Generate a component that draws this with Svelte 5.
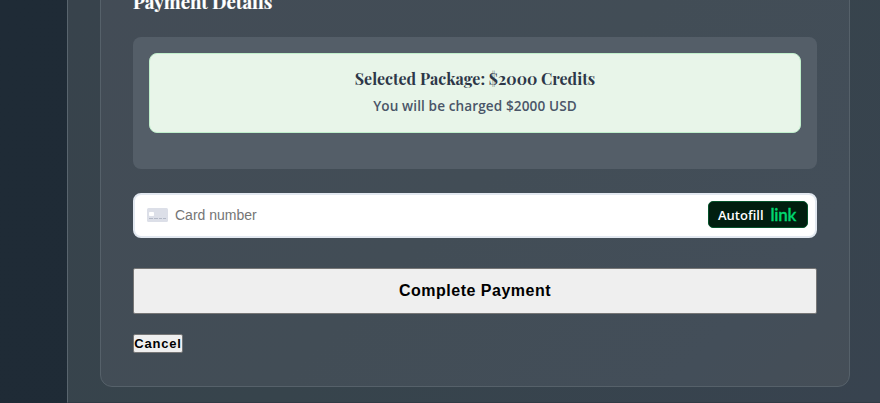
<script>
  let amount = $state(2000);
  let cardNumber = $state('');
</script>

<div class="page">
  <div class="panel">
    <section class="card">
      <h3 class="title">Payment Details</h3>

      <div class="summary">
        <div class="package">
          <h4>Selected Package: ${amount} Credits</h4>
          <p>You will be charged ${amount} USD</p>
        </div>
      </div>

      <div class="field">
        <svg class="card-icon" width="21" height="14" viewBox="0 0 21 14" aria-hidden="true">
          <rect width="21" height="14" rx="1.5" fill="#dcdfe8" />
          <rect x="2" y="4" width="5" height="4" rx="0.8" fill="#fff" />
          <path d="M2 10.5h4M7 10.5h4M12 10.5h3M16 10.5h3" stroke="#b3b9c7" stroke-width="1" />
        </svg>
        <input bind:value={cardNumber} placeholder="Card number" aria-label="Card number" />
        <button class="autofill"><span>Autofill</span><span class="link">link</span></button>
      </div>

      <button class="pay">Complete Payment</button>
      <button class="cancel">Cancel</button>
    </section>
  </div>
</div>

<style>
  .page {
    box-sizing: border-box;
    width: 880px;
    height: 403px;
    padding-left: 67px;
    overflow: hidden;
    background: linear-gradient(100deg, #1f2b36, #1e2a35);
    font-family: "Noto Sans", sans-serif;
  }
  .panel {
    box-sizing: border-box;
    height: 403px;
    padding-left: 32px;
    display: flex;
    align-items: flex-start;
    border-left: 1px solid #59656e;
    border-bottom: 1px solid #303b45;
    background: linear-gradient(135deg, #38434c 0%, #37444c 50%, #38434f 100%);
  }
  .card {
    box-sizing: border-box;
    width: 750px;
    height: 407px;
    margin-top: -20px;
    padding: 8px 32px 0;
    display: flex;
    flex-direction: column;
    align-items: flex-start;
    border: 1px solid #56616a;
    border-radius: 12px;
    background: linear-gradient(135deg, #434c56 0%, #424d56 50%, #434e59 85%, #454e57 100%);
  }
  .title {
    margin: 0 0 22px;
    height: 26px;
    font: bold 18.6px/26px "Playfair Display", "Liberation Serif", serif;
    -webkit-text-stroke: 0.2px;
    white-space: nowrap;
    color: #fff;
  }
  .summary {
    box-sizing: border-box;
    width: 684px;
    height: 132px;
    padding: 16px;
    border-radius: 8px;
    background: #545e68;
  }
  .package {
    box-sizing: border-box;
    height: 80px;
    padding-top: 14px;
    border: 1px solid #c0eecb;
    border-radius: 8px;
    background: #e8f5e9;
    text-align: center;
  }
  h4 {
    margin: 0;
    font: bold 16px/22px "Playfair Display", "Liberation Serif", serif;
    color: #2d3748;
    white-space: nowrap;
  }
  p {
    margin: 6px 0 0;
    font-family: "Open Sans", "Noto Sans", sans-serif;
    font-size: 13.6px;
    line-height: 20px;
    font-weight: 600;
    letter-spacing: 0.1px;
    color: #4a5568;
  }
  .field {
    box-sizing: border-box;
    width: 684px;
    height: 45px;
    margin-top: 24px;
    padding: 0 7px 1px 12px;
    display: flex;
    align-items: center;
    border: 2px solid #e2e8f0;
    border-radius: 8px;
    background: #fff;
  }
  .card-icon { flex: none; }
  input {
    flex: 1;
    min-width: 0;
    margin-left: 7px;
    padding: 0;
    border: 0;
    outline: 0;
    font: 14px "Liberation Sans", Arial, sans-serif;
    color: #30313d;
  }
  input::placeholder { color: #757575; opacity: 1; }
  .autofill {
    box-sizing: border-box;
    width: 100px;
    height: 27px;
    margin-bottom: 1px;
    padding: 0 11px 0 9px;
    display: flex;
    align-items: center;
    justify-content: space-between;
    border: 1px solid #04532a;
    border-radius: 5px;
    background: #011e0f;
    color: #fff;
    font: 600 13px "Open Sans", "Noto Sans", sans-serif;
  }
  .link { font: 600 17px/20px Lato, sans-serif; letter-spacing: -0.3px; color: #00d66f; -webkit-text-stroke: 0.3px; }
  .pay, .cancel {
    box-sizing: border-box;
    border: 1px solid #767676;
    background: #efefef;
    color: #000;
    font-family: "Liberation Sans", Arial, sans-serif;
    font-weight: bold;
  }
  .pay {
    width: 684px;
    height: 46px;
    margin-top: 30px;
    border-radius: 2px;
    font-size: 16px;
    letter-spacing: 0.5px;
  }
  .cancel {
    width: 50px;
    height: 19px;
    margin-top: 20px;
    padding: 0;
    border-radius: 2px;
    font-size: 13px;
    letter-spacing: 0.8px;
  }
</style>
